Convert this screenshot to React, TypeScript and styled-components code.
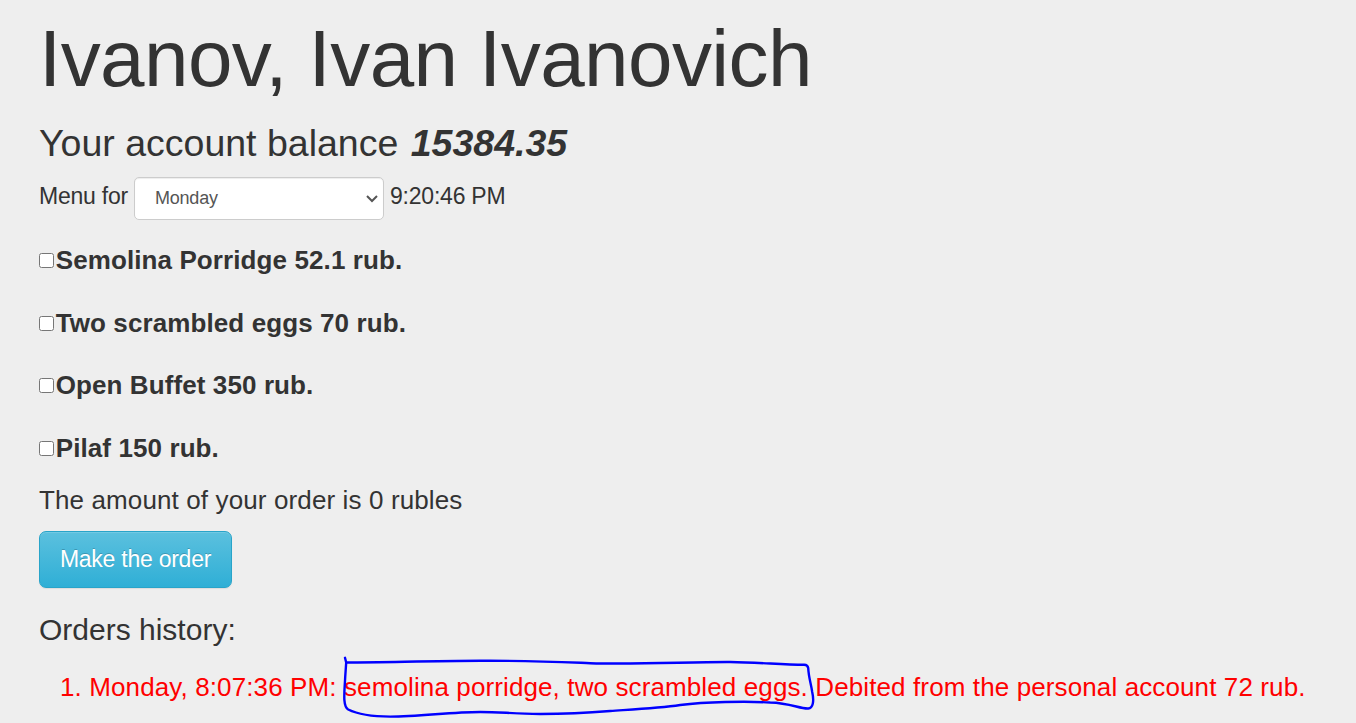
import React from 'react';
import styled, { createGlobalStyle } from 'styled-components';

const Global = createGlobalStyle`
  *, *::before, *::after { box-sizing: border-box; }
  html { background: #eee; }
  body { margin: 0; background: #eee; color: #333; font-family: "Liberation Sans", Arial, sans-serif; overflow: hidden; }
`;

const Page = styled.main`
  padding: 15px 39px 0;
  height: 723px;
  overflow: hidden;
  white-space: nowrap;
`;
const Name = styled.h1`
  margin: 0;
  font-size: 80px;
  line-height: 87px;
  font-weight: 400;
  letter-spacing: -0.58px;
`;
const Balance = styled.h2`
  margin: 21px 0 0;
  font-size: 37.5px;
  line-height: 41px;
  font-weight: 400;
`;
const Money = styled.em`
  margin-left: 2px;
  font-weight: 700;
`;
const MenuRow = styled.div`
  display: flex;
  align-items: center;
  margin-top: 13px;
  height: 43px;
  font-size: 23px;
  letter-spacing: -0.22px;
`;
const Label = styled.span`
  padding-bottom: 4px;
`;
const MenuLabel = styled(Label)`
  width: 95px;
`;
const DaySelect = styled.div`
  display: flex;
  align-items: center;
  justify-content: space-between;
  width: 250px;
  height: 43px;
  margin-right: 6px;
  padding: 0 5px 0 20px;
  border: 1px solid #ccc;
  border-radius: 5px;
  background: #fff;
  color: #555;
  font-size: 18px;
  box-shadow: inset 0 1px 1px rgba(0, 0, 0, 0.075);
`;
const Dishes = styled.div`
  padding-top: 9px;
`;
const Dish = styled.label`
  display: flex;
  align-items: center;
  height: 62.7px;
  font-size: 26px;
  font-weight: 700;
  letter-spacing: 0.1px;
`;
const Check = styled.input`
  width: 15px;
  height: 15px;
  margin: 0 1.7px 0 0;
`;
const Amount = styled.p`
  margin: 4px 0 0;
  font-size: 26px;
  line-height: 32px;
  letter-spacing: 0.12px;
`;
const OrderButton = styled.button`
  display: block;
  width: 193px;
  height: 57px;
  margin: 15.6px 0 0;
  padding: 0;
  border: 1px solid #28a4c9;
  border-radius: 7px;
  background: linear-gradient(#5bc0de, #2fafd6);
  color: #fff;
  font: 23px "Liberation Sans", Arial, sans-serif;
  letter-spacing: -0.25px;
  text-shadow: 0 -1px 0 rgba(0, 0, 0, 0.2);
  box-shadow: inset 0 1px 0 rgba(255, 255, 255, 0.15), 0 1px 1px rgba(0, 0, 0, 0.075);
`;
const HistoryTitle = styled.h3`
  margin: 25px 0 0;
  font-size: 30px;
  line-height: 34px;
  font-weight: 400;
`;
const HistoryItem = styled.div`
  display: flex;
  margin: 24px 0 0 21px;
  font-size: 26px;
  line-height: 32px;
  letter-spacing: 0.115px;
  color: #f00;
`;
const Marked = styled.span`
  position: relative;
`;
const Outline = styled.svg`
  position: absolute;
  left: -8px;
  top: -17px;
  pointer-events: none;
`;

const dishes = [
  'Semolina Porridge 52.1 rub.',
  'Two scrambled eggs 70 rub.',
  'Open Buffet 350 rub.',
  'Pilaf 150 rub.',
];

export default function App() {
  return (
    <Page>
      <Global />
      <Name>Ivanov, Ivan Ivanovich</Name>
      <Balance>Your account balance <Money>15384.35</Money></Balance>
      <MenuRow>
        <MenuLabel>Menu for</MenuLabel>
        <DaySelect>
          <span>Monday</span>
          <svg width="12" height="12" viewBox="0 0 12 12" fill="none" stroke="#555" strokeWidth="2"><path d="M1 3l5 5 5-5" /></svg>
        </DaySelect>
        <Label>9:20:46 PM</Label>
      </MenuRow>
      <Dishes>
        {dishes.map(d => (
          <Dish key={d}><Check type="checkbox" /><span>{d}</span></Dish>
        ))}
      </Dishes>
      <Amount>The amount of your order is 0 rubles</Amount>
      <OrderButton>Make the order</OrderButton>
      <HistoryTitle>Orders history:</HistoryTitle>
      <HistoryItem>
        <span>1. Monday, 8:07:36 PM:&nbsp;</span>
        <Marked>
          semolina porridge, two scrambled eggs.
          <Outline width="484" height="66" viewBox="335.8 654 484 66" fill="none" stroke="#00f" strokeWidth="2.4" strokeLinecap="round" strokeLinejoin="round">
            <path d="M344.8 657.8L346 662.5C390 662.2 430 661 480 660.8C530 660.5 560 662 590 663.2C640 664.5 690 661.8 730 662C760 662.5 780 664.5 804 664.8Q807.5 665 808 668C808.5 678 811 684 812 692C814 701 813 708 808 708.5C800 709 790 703 770 702.5C745 701 705 702 680 705C660 708 640 709 610 711C580 713.5 560 714 540 714C510 713.5 500 712 480 712C450 712 420 716.6 390 716.6C370 716.5 357 714 348 709.5C342 706 344.5 690 345 677L346 662.5" />
          </Outline>
        </Marked>
        <span>&nbsp;Debited from the personal account 72 rub.</span>
      </HistoryItem>
    </Page>
  );
}
